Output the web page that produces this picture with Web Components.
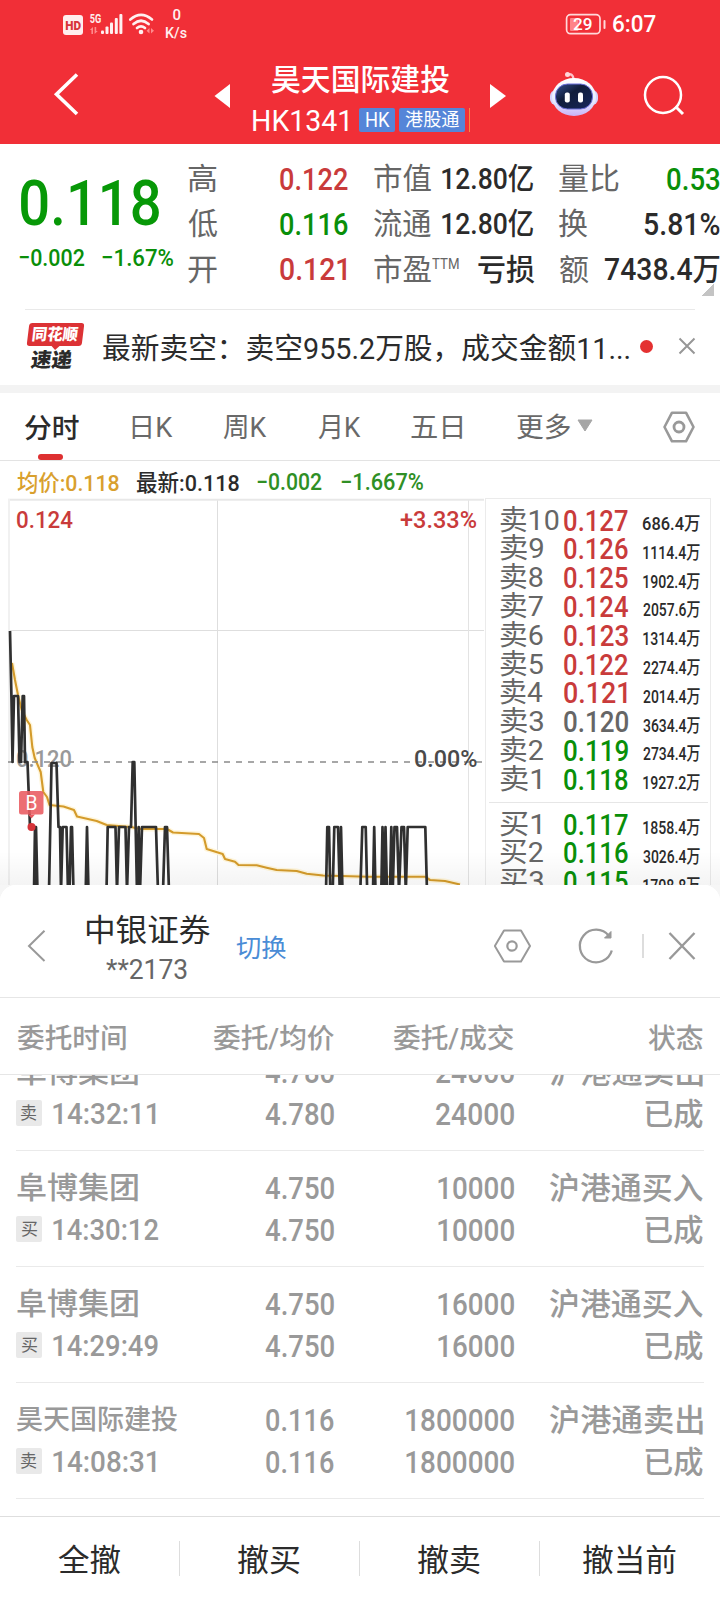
<!DOCTYPE html>
<html lang="zh-CN">
<head>
<meta charset="utf-8">
<title>昊天国际建投 HK1341</title>
<style>
html,body{margin:0;padding:0;background:#fff}
body{width:720px;height:1600px;overflow:hidden;font-family:Roboto,"Noto Sans CJK SC",sans-serif}
</style>
</head>
<body>
<stock-page></stock-page>
<script>
const FONT = 'Roboto,"Noto Sans CJK SC",sans-serif';
const ctx = document.createElement('canvas').getContext('2d');

/* One line of text condensed or widened to a given ink width.
   w: ink width, s: font size, b: weight, c: colour, m: gap on its left */
class FitText extends HTMLElement {
  connectedCallback() {
    if (this.shadowRoot) return;
    const a = (n, d) => this.getAttribute(n) ?? d;
    const w = +a('w', 0), s = +a('s', 24), b = a('b', '400'), h = +a('h', Math.round(s * 1.2));
    ctx.font = `${b} ${s}px ${FONT}`;
    const t = ctx.measureText(this.textContent);
    const k = w / (t.actualBoundingBoxLeft + t.actualBoundingBoxRight);
    this.attachShadow({mode: 'open'}).innerHTML = `<style>
      :host{display:block;flex:none;width:${w}px;height:${h}px;line-height:${h}px;margin-left:${a('m', 0)}px;
        white-space:nowrap;font-family:${FONT};font-size:${s}px;font-weight:${b};${a('c', '') ? 'color:' + a('c') : ''}}
      span{display:inline-block;vertical-align:top;transform-origin:0 50%;transform:translateX(${t.actualBoundingBoxLeft * k}px) scaleX(${k})}
    </style><span><slot></slot></span>`;
  }
}
customElements.define('fit-text', FitText);

function define(name, html) {
  const tpl = document.createElement('template');
  tpl.innerHTML = html;
  customElements.define(name, class extends HTMLElement {
    connectedCallback() {
      if (!this.shadowRoot) this.attachShadow({mode: 'open'}).appendChild(tpl.content.cloneNode(true));
    }
  });
}
const T = (text, w, s, m = 0, c = '', b = 400, cls = '', h = Math.round(s * 1.2)) =>
  `<fit-text class="${cls}" w="${w}" s="${s}" m="${m}" c="${c}" b="${b}" h="${h}">${text}</fit-text>`;

define('status-bar', `
<style>
:host{display:flex;height:48px;color:#fff;align-items:center}
svg{display:block;flex:none}
.net{display:flex;flex-direction:column;align-items:center;margin-left:12px;width:21px}
.bat{margin-left:378px;display:block}
</style>
<svg width="92" height="48" style="margin-left:62px" viewBox="62 0 92 48">
 <rect x="63" y="15" width="20" height="20" rx="3" fill="#ffeeee"/>
 <text x="65.2" y="29.7" font-family="Roboto" font-weight="900" font-size="12.5" fill="#d8343a" textLength="15.8" lengthAdjust="spacingAndGlyphs">HD</text>
 <text x="89.7" y="23" font-family="Roboto" font-weight="700" font-size="12" fill="#ffecec" textLength="11.5" lengthAdjust="spacingAndGlyphs">5G</text>
 <path d="M93 27v7h-1.600v-4h-1.600zM94.600 27h1.600v4h1.600l-3.200 3z" fill="#ff8a8c"/>
 <g fill="#fff0f0"><rect x="101" y="30.500" width="3" height="3.500" rx="1"/><rect x="105.500" y="26.500" width="3" height="7.500" rx="1"/><rect x="110" y="22.500" width="3" height="11.500" rx="1"/><rect x="114.800" y="18" width="3" height="16" rx="1"/><rect x="119.400" y="14" width="3" height="20" rx="1"/></g>
 <g fill="none" stroke="#fff0f0" stroke-width="2.700" stroke-linecap="round"><path d="M130.300 19.500Q141 10.300 152 19.500"/><path d="M133.500 24Q141 17.500 148.600 24"/><path d="M137 28Q141 24.600 145 28"/></g>
 <circle cx="141" cy="32" r="2.300" fill="#fff0f0"/>
 <path d="M149.500 28v5.500l-3-2.700zM151 28v5.500l3-2.700z" fill="#ff8a8c"/>
</svg>
<div class="net">${T('0', 8, 15, 0, '#fff0f0', 500)}${T('K/s', 21, 15.500, 0, '#fff0f0', 500)}</div>
<svg class="bat" width="42" height="24" viewBox="565 12 42 24">
 <rect x="566.600" y="14.700" width="33.400" height="19" rx="4" fill="none" stroke="#ffd9da" stroke-width="1.700"/>
 <rect x="570" y="18" width="8.500" height="13" rx="1" fill="#ff8388"/>
 <rect x="603.500" y="20" width="2" height="9" rx="1" fill="#ffd9da"/>
 <text x="573" y="30.300" font-family="Roboto" font-weight="500" font-size="17" fill="#fff" textLength="19.500" lengthAdjust="spacingAndGlyphs">29</text>
</svg>
${T('6:07', 43, 23.500, 6, '#fff', 500, '', 30)}`);

define('title-bar', `
<style>
:host{display:flex;height:96px;color:#fff;align-items:flex-start}
svg{display:block;flex:none}
.mid{display:flex;flex-direction:column;flex:none;width:226px;margin-left:17px;padding-top:14px}
.code{display:flex;align-items:center;height:26px;margin-top:10px;margin-left:5.500px}
.tag{display:flex;align-items:center;flex:none;height:24px;background:#5585d8;border-radius:2px;margin-top:-2px}
.line{width:1.500px;height:24px;background:#f58a45;margin:-2px 0 0 4px}
</style>
<svg width="180" height="96" style="margin-left:50px" viewBox="50 48 180 96"><path d="M77 74.500L56.500 94.200L77 114" fill="none" stroke="#fff" stroke-width="3.600"/><path d="M214.500 96L230 84v24z" fill="#fff"/></svg>
<div class="mid">
 ${T('昊天国际建投', 177, 30, 25, '', 500)}
 <div class="code">${T('HK1341', 95, 29.500, 0)}
  <div class="tag" style="width:36px;margin-left:11px">${T('HK', 24, 20, 7)}</div>
  <div class="tag" style="width:66px;margin-left:4px">${T('港股通', 54, 18.500, 6)}</div>
  <div class="line"></div></div>
</div>
<svg width="225" height="96" style="margin-left:10px" viewBox="483 48 225 96">
 <defs><linearGradient id="h" x2="0" y2="1"><stop offset="0" stop-color="#fff"/><stop offset=".6" stop-color="#e6ecff"/><stop offset="1" stop-color="#c9b2f6"/></linearGradient>
 <linearGradient id="f" x2="1" y2="1"><stop offset="0" stop-color="#35508f"/><stop offset=".4" stop-color="#111d3b"/><stop offset="1" stop-color="#17265c"/></linearGradient></defs>
 <path d="M490 84l16 12-16 12z" fill="#fff"/>
 <path d="M567.500 74.500Q573 73 573.500 79" fill="none" stroke="#ffc3c9" stroke-width="2.400"/><circle cx="567.500" cy="74.500" r="2.500" fill="#ffd6da"/>
 <rect x="550" y="90" width="48" height="15" rx="6" fill="#d6d2fb"/>
 <ellipse cx="574" cy="97" rx="22" ry="19" fill="url(#h)"/>
 <rect x="555.500" y="84" width="37" height="25" rx="12" fill="url(#f)" stroke="#6d70db" stroke-width="1"/>
 <rect x="564.800" y="92.500" width="5" height="10" rx="2" fill="#fff"/><rect x="578" y="92.500" width="5" height="10" rx="2" fill="#fff"/>
 <circle cx="663" cy="95" r="18" fill="none" stroke="#fff" stroke-width="2.500"/><path d="M675.500 106.500L683 114" stroke="#fff" stroke-width="3"/>
</svg>`);

const G = '#098f09', R = '#c93b3b', D = '#2b2b2b', L = '#666';
define('quote-board', `
<style>
:host{display:flex;height:165px;position:relative;box-sizing:border-box}
.main{width:188px}
.chg{display:flex}
.rows{display:flex;flex-direction:column;padding-top:12.500px}
.r{display:flex;height:45.300px;align-items:center}
.r .u{align-self:flex-start;margin-top:8px}
.tri{position:absolute;right:6px;bottom:13px;width:12px;height:12px;background:linear-gradient(135deg,transparent 50%,#c4c4c4 50%)}
</style>
<div class="main"><div style="height:22px"></div>
${T('0.118', 138, 63.500, 21, '#079807', 500, '', 75)}
<div class="chg" style="margin-top:2px">${T('−0.002', 65, 24.500, 19, G, 500)}${T('−1.67%', 71, 24.500, 18, G, 500)}</div></div>
<div class="rows">
<div class="r">${T('高', 29, 30, 0, L)}${T('0.122', 68, 30.500, 63, R, 500)}${T('市值', 57, 30, 26, L)}${T('12.80亿', 91.500, 30, 11, D, 500)}${T('量比', 60, 30, 25.500, L)}${T('0.53', 52.500, 30.500, 48, G, 500)}</div>
<div class="r">${T('低', 29, 30, 0, L)}${T('0.116', 68, 30.500, 63, G, 500)}${T('流通', 57.500, 30, 26, L)}${T('12.80亿', 91.500, 30, 10.500, D, 500)}${T('换', 29, 30, 25.500, L)}${T('5.81%', 76, 30.500, 55.500, D, 500)}</div>
<div class="r">${T('开', 29, 30, 0, L)}${T('0.121', 66.500, 30.500, 63, R, 500)}${T('市盈', 57, 30, 27.500, L)}${T('TTM', 27, 15.500, 1, L, 400, 'u')}${T('亏损', 57, 30, 19, D, 500)}${T('额', 29, 30, 25, L)}${T('7438.4万', 114.500, 30.500, 16, D, 500)}</div>
</div><div class="tri"></div>`);

define('news-strip', `
<style>
:host{display:flex;height:76px;align-items:center;position:relative;border-bottom:8px solid #f3f3f3}
:host::before{content:"";position:absolute;left:25px;right:25px;top:0;height:1px;background:#e9e9e9}
.logo{width:58px;height:48px;margin-left:26px;display:flex;flex-direction:column;align-items:flex-start;flex:none}
.red{width:55px;height:24px;background:#dc3235;border-radius:3px;transform:skewX(-7deg);margin-left:1.500px;display:flex;align-items:center;position:relative}
.red::after{content:"";position:absolute;left:25px;bottom:-4px;border:4px solid transparent;border-top-color:#dc3235;border-bottom:0}
.blk{transform:skewX(-7deg);margin-top:4px}
.dot{width:13px;height:13px;border-radius:50%;background:#e43131;margin:-1px 0 0 10px}
svg{display:block;margin:-2px 0 0 25px}
.txt{margin-top:4px}
</style>
<div class="logo"><div class="red">${T('同花顺', 45, 16, 5, '#fff', 900)}</div>
<div class="blk">${T('速递', 41, 20, 5, '#2a2a2a', 900, '', 21)}</div></div>
${T('最新卖空：卖空955.2万股，成交金额11...', 526.500, 29, 19, D, 400, 'txt')}
<div class="dot"></div>
<svg width="18" height="18" viewBox="0 0 18 18"><path d="M1.500 1.500l15 15m0-15l-15 15" stroke="#979797" stroke-width="2"/></svg>`);

define('chart-tabs', `
<style>
:host{display:flex;height:67px;border-bottom:1px solid #e3e3e3;align-items:center;color:#696969}
.on{display:flex;flex-direction:column;width:54px;margin-left:25px;height:67px;align-items:center;justify-content:flex-end;color:#2b2b2b}
.on i{width:25px;height:6px;border-radius:3px;background:#de3031;margin:9px 3px 0 0}
.t{margin-top:2px}
svg{display:block;flex:none}
</style>
<div class="on">${T('分时', 54, 27.500, 0, '', 500)}<i></i></div>
${T('日K', 41, 27.500, 53, '', 400, 't')}${T('周K', 44, 27.500, 50, '', 400, 't')}${T('月K', 43, 27.500, 50.500, '', 400, 't')}${T('五日', 51, 27.500, 50, '', 400, 't')}${T('更多', 53, 27.500, 55, '', 400, 't')}
<svg width="16" height="13" style="margin-left:7px;margin-top:-2px"><path d="M1 1h14l-7 11z" fill="#a6a6a6" stroke="#a6a6a6" stroke-linejoin="round"/></svg>
<svg width="34" height="32" viewBox="0 0 34 32" style="margin-left:69px"><path d="M10 1.700h14L31.500 16 24 30.300H10L2.500 16z" fill="none" stroke="#999" stroke-width="2.600" stroke-linejoin="round"/><circle cx="17" cy="16" r="5" fill="none" stroke="#999" stroke-width="2.800"/></svg>`);

const lab = (x, y, w, t, c) => `<text x="${x}" y="${y}" font-size="24" font-weight="500" fill="${c}" textLength="${w}" lengthAdjust="spacingAndGlyphs">${t}</text>`;
const AVG = 'M12 663L15 680 18 695 21.700 710 26.700 720 30 725 32.300 747 34.700 758 40.700 772 43.300 792 47 797 49.500 805 63.500 806.500 74 810 77 816.500 96.700 821 106.700 825 131 827 140 829 167 829 173 832.500 199 834 204 838 206.700 849 222.700 854 225 859 235 861.700 238.500 865 256.700 865.300 266.700 867.700 276.700 870 296.700 871 306.700 873.700 323 875.500 368 876.700 425 876.700 430 880 445 881 460 884.500';
define('price-chart', `
<style>:host{display:block;width:485px;height:388px;flex:none}svg{display:block;font-family:Roboto,sans-serif}</style>
<svg width="485" height="388" viewBox="0 497 485 388">
<g fill="none" stroke="#dedede"><path d="M8 630.500H484M217.500 499V885"/><path d="M468.500 499V885" stroke="#e3e3e3"/><path d="M8 499.700H484" stroke="#e8e8e8" stroke-width="2"/><path d="M9 499V885" stroke="#f1f1f1" stroke-width="2"/></g>
<path d="${AVG}" fill="none" stroke="#fff6dc" stroke-width="5"/>
<path d="${AVG}" fill="none" stroke="#d49b2b" stroke-width="2.100" stroke-linejoin="round"/>
<path d="M8 762H484" stroke="#8b8b8b" stroke-width="1.700" stroke-dasharray="6 6"/>
${lab(16, 767, 56, '0.120', '#999')}
<g fill="none" stroke="#303030" stroke-width="2.700" stroke-linejoin="round">
<path d="M10 631L11.500 700 12.500 762 14 696H18L19.500 762 21 762 22.700 696 24 696 25 762H27.500L30 827H35L34 892M34.500 892L36 827 37.500 892M49 892L51.500 763H56.500L58.500 827H60L61 892 62.700 827H66.500L68 892 69.500 892 71 827H72L73.500 892M85.700 892L87 827 88.500 892M106.500 892L107.700 827H115.500L117 892 119 827H125.500L127 892 129 827H131L132.700 762H134.300L137 892 138.700 827 140 892 142 827H156L158 892M163 892L165 827H167L169 892"/>
<path d="M326 892L327.300 827H329L330.300 892M332.700 892L334.300 827H338L339.800 892 341 827 342.500 892M360.300 892L362.300 827H365.700L367.200 892M373 892L374.200 827 375.500 892M381.300 892L382.500 827 384 892 385.500 827 387 892M390 892L391.300 827 392.700 892 394.500 827H397L399 892 401.500 827H404L405.800 892 407.700 827H425.300L427 892"/></g>
${lab(16, 528, 57, '0.124', R)}${lab(400, 528, 77, '+3.33%', R)}${lab(414, 767, 63.500, '0.00%', '#4a4a4a')}
<rect x="19" y="791" width="24.500" height="23.500" rx="2.500" fill="#e95a60" fill-opacity=".88"/><path d="M28 814.500h7l-3.500 4z" fill="#e95a60"/>
<text x="25.500" y="810" font-size="20" fill="#fff" textLength="12" lengthAdjust="spacingAndGlyphs">B</text>
<circle cx="31.500" cy="827" r="4" fill="#d63439"/>
</svg>`);

const sells = [['10', .127, '686.4'], ['9', .126, '1114.4'], ['8', .125, '1902.4'], ['7', .124, '2057.6'], ['6', .123, '1314.4'], ['5', .122, '2274.4'], ['4', .121, '2014.4'], ['3', .12, '3634.4'], ['2', .119, '2734.4'], ['1', .118, '1927.2']];
const buys = [['1', .117, '1858.4'], ['2', .116, '3026.4'], ['3', .115, '1708.8']];
const level = side => ([n, p, v]) => {
  const c = p > .12 ? R : p === .12 ? '#666' : G;
  const w = n === '10' ? 59 : n === '1' ? 40 : 43;
  return `<div class="r">${T(side + n, w, 28, 14, L, 400, '', 28)}${T(p.toFixed(3), p === .121 ? 62.5 : 64, 29, 63.5 - w, c, 500, '', 28)}${T(v + '万', 57, 18.5, p === .121 ? 16.5 : 15, D, 500, 'v')}</div>`;
};
define('order-book', `
<style>
:host{display:block;width:226px;box-sizing:border-box;border:1px solid #ebebeb;border-bottom:0;margin-top:1px;padding-top:7.200px;height:387px;overflow:hidden;flex:none}
.r{display:flex;height:28.800px;align-items:center}
.v{margin-top:7px}
hr{border:0;border-top:1px solid #e6e6e6;margin:8px 2px 7px 3px}
</style>
${sells.map(level('卖')).join('')}<hr>${buys.map(level('买')).join('')}`);

define('chart-area', `
<style>
:host{display:block;height:424px;position:relative}
.leg{display:flex;height:36px;align-items:center;box-sizing:border-box;padding-top:8px}
.body{display:flex;height:388px}
.shade{position:absolute;left:0;right:0;bottom:0;height:34px;background:linear-gradient(rgba(0,0,0,0),rgba(0,0,0,.045))}
</style>
<div class="leg">${T('均价:0.118', 102, 22.500, 17, '#d9a02e', 500)}${T('最新:0.118', 102, 22.500, 18, D, 500)}${T('−0.002', 65, 23, 18, '#2f8f25', 500)}${T('−1.667%', 82, 23, 19, '#2f8f25', 500)}</div>
<div class="body"><price-chart></price-chart><order-book></order-book></div>
<div class="shade"></div>`);

define('sheet-header', `
<style>
:host{display:flex;height:112px;border-bottom:1px solid #e6e6e6;background:#fff;border-radius:16px 16px 0 0}
.acct{display:flex;flex-direction:column;width:124px;margin-left:40px;padding-top:27px;color:#2b2b2b}
svg{display:block;flex:none}
</style>
<svg width="19" height="34" viewBox="0 0 19 34" style="margin:44px 0 0 27px"><path d="M17.500 1.700L2 17l15.500 15" fill="none" stroke="#999" stroke-width="2"/></svg>
<div class="acct">${T('中银证券', 124.500, 31, -0.5)}<div style="height:5px"></div>${T('**2173', 81, 27, 20, '#666')}</div>
<div style="padding-top:47.500px">${T('切换', 50, 25.500, 26, '#4a8cd6')}</div>
<svg width="203" height="40" viewBox="494 926 203 40" style="margin:41px 0 0 208px" fill="none" stroke="#999">
<path d="M504 930.500h17L530 946l-9 15.500h-17L494.800 946z" stroke-width="2" stroke-linejoin="round"/><circle cx="512" cy="946" r="4.700" stroke-width="2.200"/>
<path d="M609 936A16.300 16.300 0 1 0 611.800 950.500" stroke-width="2.300"/><path d="M611 931.500v6.500h-6.500z" fill="#999" stroke-width="1"/>
<path d="M643 934v24" stroke="#ddd" stroke-width="2"/><path d="M669.500 933l25 26m0-26l-25 26" stroke-width="2.400"/></svg>`);

const cols = 'display:grid;grid-template-columns:163px 155px 180px 189px;justify-items:end;align-items:center';
const H = '#999';
define('order-head', `
<style>:host{${cols};height:77px;border-bottom:1px solid #e6e6e6;padding:4px 17px 0 16px;box-sizing:border-box}
.a{justify-self:start}</style>
${T('委托时间', 109, 27.500, .5, H, 500, 'a')}${T('委托/均价', 121, 27.500, 0, H, 500)}${T('委托/成交', 121, 27.500, 0, H, 500)}${T('状态', 55, 27.500, 0, H, 500)}`);

/* One order: security, side, time, price, quantity */
class OrderRow extends HTMLElement {
  connectedCallback() {
    if (this.shadowRoot) return;
    const g = n => this.getAttribute(n), side = g('side'), name = g('name');
    const qw = g('qty').length === 7 ? 108 : g('qty')[0] === '1' ? 76 : 78;
    const pw = g('price')[0] === '4' ? 69 : 68;
    this.attachShadow({mode: 'open'}).innerHTML = `
<style>:host{${cols};grid-template-rows:42px 42px;padding:16px 1px 15px 0;margin:0 16px;border-bottom:1px solid #eaeaea;color:#999}
.a{justify-self:start}.t{display:flex;align-items:center}
.tag{width:26px;height:26px;background:#e9e9e9;border-radius:2px;display:flex;align-items:center;margin-top:-2px}</style>
${T(name, name.length > 4 ? 161 : 121, name.length > 4 ? 27 : 30, .5, '', 500, 'a')}${T(g('price'), pw, 30.5, 0, '', 500)}${T(g('qty'), qw, 30.5, 0, '', 500)}${T('沪港通' + g('act'), 153, 30.5, 0, '', 500)}
<div class="a t"><div class="tag">${T(side, 16, 17, 5, '#666')}</div>${T(g('time'), g('time').endsWith('1') ? 103 : 105, 30, 11, '', 500)}</div>${T(g('price'), pw, 30.5, 0, '', 500)}${T(g('qty'), qw, 30.5, 0, '', 500)}${T('已成', 58, 30.5, 0, '', 500)}`;
  }
}
customElements.define('order-row', OrderRow);

define('order-list', `
<style>:host{display:block;height:441px;overflow:hidden}order-row:first-of-type{margin-top:-40px}</style>
<order-row name="阜博集团" side="卖" act="卖出" time="14:32:11" price="4.780" qty="24000"></order-row>
<order-row name="阜博集团" side="买" act="买入" time="14:30:12" price="4.750" qty="10000"></order-row>
<order-row name="阜博集团" side="买" act="买入" time="14:29:49" price="4.750" qty="16000"></order-row>
<order-row name="昊天国际建投" side="卖" act="卖出" time="14:08:31" price="0.116" qty="1800000"></order-row>`);

define('cancel-bar', `
<style>:host{display:grid;grid-template-columns:repeat(4,1fr);border-top:1px solid #dedede;height:83px;box-sizing:border-box;align-items:start;color:#2b2b2b}
div{display:flex;justify-content:center;align-items:center;height:35px;margin-top:24px;border-right:1px solid #ddd}
div:last-child{border-color:transparent}fit-text{padding:4px 1px 0 0}</style>
<div>${T('全撤', 62, 31)}</div><div>${T('撤买', 62, 31)}</div><div>${T('撤卖', 62, 31)}</div><div>${T('撤当前', 93, 31)}</div>`);

define('stock-page', `
<style>:host{display:flex;flex-direction:column;width:720px;height:1600px;background:#fff;overflow:hidden}
header{background:#f12f37;height:144px;flex:none}
.sheet{background:#f6f6f6;flex:none}.in{background:#fff;border-radius:16px 16px 0 0}</style>
<header><status-bar></status-bar><title-bar></title-bar></header>
<quote-board></quote-board><news-strip></news-strip><chart-tabs></chart-tabs><chart-area></chart-area>
<section class="sheet"><div class="in"><sheet-header></sheet-header><order-head></order-head><order-list></order-list><cancel-bar></cancel-bar></div></section>`);
</script>
</body>
</html>
